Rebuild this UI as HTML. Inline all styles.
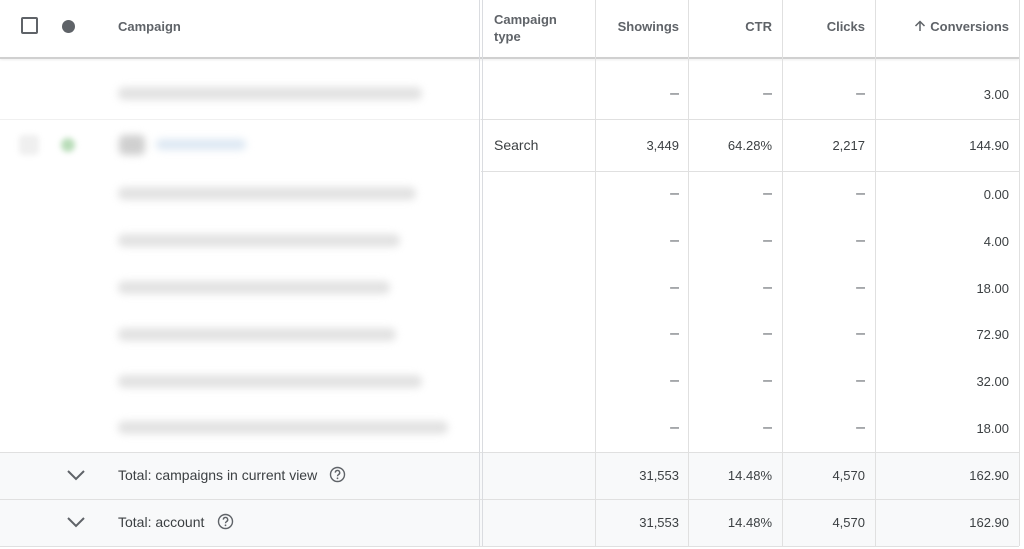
<!DOCTYPE html>
<html><head><meta charset="utf-8"><style>
*{margin:0;padding:0;box-sizing:border-box}
body{width:1024px;height:549px;background:#fff;font-family:"Liberation Sans",Arial,sans-serif;font-size:13px;color:#3c4043;position:relative;overflow:hidden}
.a{position:absolute}
.h{font-weight:bold;color:#5f6368;font-size:13px}
.v{position:absolute;top:0;width:1px;background:#e0e0e0}
.hl{position:absolute;height:1px;background:#e0e0e0}
.n{position:absolute;text-align:right;width:90px}
.d{position:absolute;text-align:right;width:90px;font-size:16px;color:#5f6368;line-height:16px}
.bl{position:absolute;left:118px;height:13px;background:#e2e2e2;border-radius:6px;filter:blur(4px)}
.tot{position:absolute;left:0;width:1019px;height:47px;background:#f8f9fa}
</style></head><body>
<div class="tot" style="top:452px"></div>
<div class="tot" style="top:499px"></div>
<div class="hl" style="top:57px;left:0;width:1019px;height:2px;background:#d0d0d0;box-shadow:0 1px 2px rgba(0,0,0,.08)"></div>
<div class="hl" style="top:119px;left:0;width:1019px;background:#f0f0f0"></div>
<div class="hl" style="top:119px;left:481px;width:538px"></div>
<div class="hl" style="top:171px;left:481px;width:538px"></div>
<div class="hl" style="top:452px;left:0;width:1019px"></div>
<div class="hl" style="top:499px;left:0;width:1019px"></div>
<div class="hl" style="top:546px;left:0;width:1019px"></div>
<div class="v" style="left:479px;height:546px;background:#dadce0"></div>
<div class="v" style="left:482px;height:546px;background:#dadce0"></div>
<div class="v" style="left:595px;height:546px"></div>
<div class="v" style="left:688px;height:546px"></div>
<div class="v" style="left:782px;height:546px"></div>
<div class="v" style="left:875px;height:546px"></div>
<div class="v" style="left:1019px;height:546px"></div>
<div class="a" style="left:21px;top:17px;width:17px;height:17px;border:2px solid #5f6368;border-radius:2px"></div>
<div class="a" style="left:62px;top:20px;width:13px;height:13px;border-radius:50%;background:#5f6368"></div>
<div class="a h" style="left:118px;top:19px">Campaign</div>
<div class="a h" style="left:494px;top:11px;line-height:17px">Campaign<br>type</div>
<div class="a h" style="left:589px;top:19px;width:90px;text-align:right">Showings</div>
<div class="a h" style="left:682px;top:19px;width:90px;text-align:right">CTR</div>
<div class="a h" style="left:775px;top:19px;width:90px;text-align:right">Clicks</div>
<div class="a h" style="left:880px;top:19px;width:129px;text-align:right"><svg width="12" height="12" viewBox="0 0 12 12" style="vertical-align:-1px;margin-right:4px"><path d="M6 11V1.5M1.5 6L6 1.5L10.5 6" fill="none" stroke="#5f6368" stroke-width="1.5"/></svg>Conversions</div>
<div class="bl" style="top:87px;width:304px"></div>
<div class="a" style="left:19px;top:135px;width:20px;height:20px;border-radius:4px;background:#efefef;filter:blur(3px)"></div>
<div class="a" style="left:61px;top:138px;width:14px;height:14px;border-radius:50%;background:#b8dcb8;filter:blur(3px)"></div>
<div class="a" style="left:119px;top:135px;width:26px;height:20px;border-radius:5px;background:#cfcfcf;filter:blur(4px)"></div>
<div class="a" style="left:156px;top:139px;width:90px;height:11px;border-radius:5px;background:#dde8f3;filter:blur(4px)"></div>
<div class="bl" style="top:187px;width:298px"></div>
<div class="bl" style="top:234px;width:282px"></div>
<div class="bl" style="top:281px;width:272px"></div>
<div class="bl" style="top:328px;width:278px"></div>
<div class="bl" style="top:375px;width:304px"></div>
<div class="bl" style="top:421px;width:330px"></div>
<div class="a" style="left:494px;top:137px;font-size:14px">Search</div>
<div class="d" style="left:589px;top:86px">–</div><div class="d" style="left:682px;top:86px">–</div><div class="d" style="left:775px;top:86px">–</div><div class="n" style="left:919px;top:87px">3.00</div>
<div class="n" style="left:589px;top:138px">3,449</div><div class="n" style="left:682px;top:138px">64.28%</div><div class="n" style="left:775px;top:138px">2,217</div><div class="n" style="left:919px;top:138px">144.90</div>
<div class="d" style="left:589px;top:186px">–</div><div class="d" style="left:682px;top:186px">–</div><div class="d" style="left:775px;top:186px">–</div><div class="n" style="left:919px;top:187px">0.00</div>
<div class="d" style="left:589px;top:233px">–</div><div class="d" style="left:682px;top:233px">–</div><div class="d" style="left:775px;top:233px">–</div><div class="n" style="left:919px;top:234px">4.00</div>
<div class="d" style="left:589px;top:280px">–</div><div class="d" style="left:682px;top:280px">–</div><div class="d" style="left:775px;top:280px">–</div><div class="n" style="left:919px;top:281px">18.00</div>
<div class="d" style="left:589px;top:326px">–</div><div class="d" style="left:682px;top:326px">–</div><div class="d" style="left:775px;top:326px">–</div><div class="n" style="left:919px;top:327px">72.90</div>
<div class="d" style="left:589px;top:373px">–</div><div class="d" style="left:682px;top:373px">–</div><div class="d" style="left:775px;top:373px">–</div><div class="n" style="left:919px;top:374px">32.00</div>
<div class="d" style="left:589px;top:420px">–</div><div class="d" style="left:682px;top:420px">–</div><div class="d" style="left:775px;top:420px">–</div><div class="n" style="left:919px;top:421px">18.00</div>
<svg class="a" style="left:66px;top:468px" width="20" height="14" viewBox="0 0 20 14"><path d="M2 3 L10 11 L18 3" fill="none" stroke="#5f6368" stroke-width="2"/></svg>
<div class="a" style="left:118px;top:467px;font-size:14px">Total: campaigns in current view</div>
<svg class="a" style="left:329px;top:466px" width="17" height="17" viewBox="0 0 17 17"><circle cx="8.5" cy="8.5" r="7" fill="none" stroke="#5f6368" stroke-width="1.4"/><path d="M6.3 6.6a2.2 2.2 0 1 1 3.2 2c-.7.4-1 .8-1 1.6" fill="none" stroke="#5f6368" stroke-width="1.4"/><circle cx="8.5" cy="12.3" r=".9" fill="#5f6368"/></svg>
<div class="n" style="left:589px;top:468px">31,553</div><div class="n" style="left:682px;top:468px">14.48%</div><div class="n" style="left:775px;top:468px">4,570</div><div class="n" style="left:919px;top:468px">162.90</div>
<svg class="a" style="left:66px;top:515px" width="20" height="14" viewBox="0 0 20 14"><path d="M2 3 L10 11 L18 3" fill="none" stroke="#5f6368" stroke-width="2"/></svg>
<div class="a" style="left:118px;top:514px;font-size:14px">Total: account</div>
<svg class="a" style="left:217px;top:513px" width="17" height="17" viewBox="0 0 17 17"><circle cx="8.5" cy="8.5" r="7" fill="none" stroke="#5f6368" stroke-width="1.4"/><path d="M6.3 6.6a2.2 2.2 0 1 1 3.2 2c-.7.4-1 .8-1 1.6" fill="none" stroke="#5f6368" stroke-width="1.4"/><circle cx="8.5" cy="12.3" r=".9" fill="#5f6368"/></svg>
<div class="n" style="left:589px;top:515px">31,553</div><div class="n" style="left:682px;top:515px">14.48%</div><div class="n" style="left:775px;top:515px">4,570</div><div class="n" style="left:919px;top:515px">162.90</div>
</body></html>
